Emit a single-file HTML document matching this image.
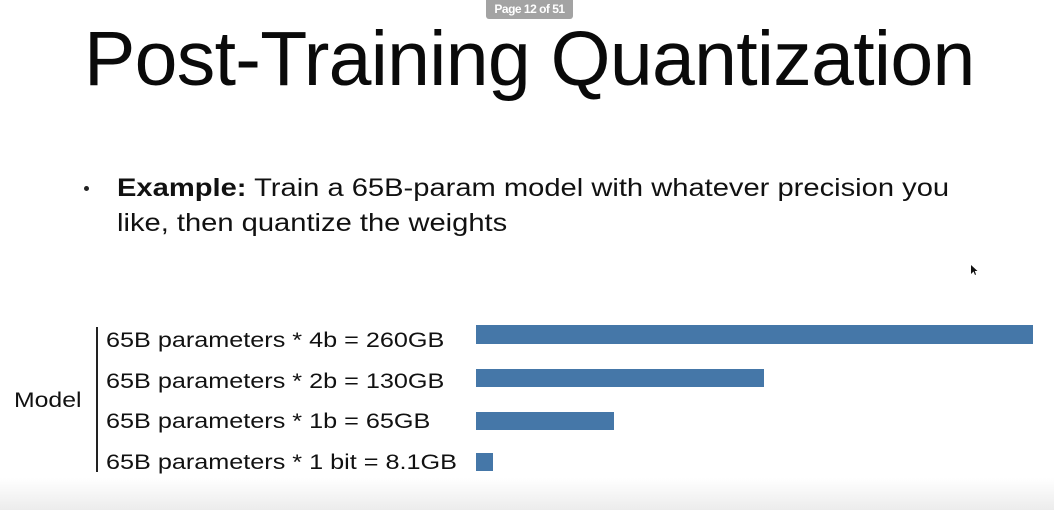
<!DOCTYPE html>
<html><head><style>
body{margin:0;width:1054px;height:510px;overflow:hidden;background:#fff;position:relative;font-family:"Liberation Sans",Arial,sans-serif;color:#111}
.a{position:absolute;white-space:nowrap;line-height:1;transform-origin:0 0}
.s{transform:scaleX(1.18)}
.bar{position:absolute;background:#4577a8;left:476px}
</style></head><body>
<div class="a" style="left:486px;top:0;width:87px;height:19px;background:#a3a3a3;border-radius:0 0 3px 3px;color:#fff;font-size:12px;font-weight:bold;text-align:center;line-height:19px;letter-spacing:-0.5px">Page 12 of 51</div>
<div class="a" style="left:84px;top:21px;font-size:77px;letter-spacing:-0.7px;color:#0a0a0a">Post-Training Quantization</div>
<div style="position:absolute;left:84px;top:186px;width:5px;height:5px;border-radius:50%;background:#222"></div>
<div class="a s" style="left:117px;top:176px;font-size:25px;transform:scaleX(1.165)"><b>Example:</b> Train a 65B-param model with whatever precision you</div>
<div class="a s" style="left:117px;top:211px;font-size:25px;transform:scaleX(1.165)">like, then quantize the weights</div>
<div class="a s" style="left:14px;top:390px;font-size:21px">Model</div>
<div style="position:absolute;left:96px;top:327px;width:2px;height:145px;background:#222"></div>
<div class="a s" style="left:106px;top:330px;font-size:21px;transform:scaleX(1.2)">65B parameters * 4b = 260GB</div>
<div class="a s" style="left:106px;top:371px;font-size:21px;transform:scaleX(1.2)">65B parameters * 2b = 130GB</div>
<div class="a s" style="left:106px;top:411px;font-size:21px;transform:scaleX(1.2)">65B parameters * 1b = 65GB</div>
<div class="a s" style="left:106px;top:452px;font-size:21px;transform:scaleX(1.2)">65B parameters * 1 bit = 8.1GB</div>
<div class="bar" style="top:325px;width:557px;height:19px"></div>
<div class="bar" style="top:369px;width:288px;height:18px"></div>
<div class="bar" style="top:412px;width:138px;height:18px"></div>
<div class="bar" style="top:453px;width:17px;height:18px"></div>
<div style="position:absolute;left:0;top:478px;width:1054px;height:32px;background:linear-gradient(#fff,#ececec)"></div>
<svg style="position:absolute;left:970px;top:264px" width="8" height="12"><path d="M1 1 L1 10 L3.5 7.5 L5 11 L6 10.5 L4.8 7 L7.5 7 Z" fill="#111"/></svg>
</body></html>
